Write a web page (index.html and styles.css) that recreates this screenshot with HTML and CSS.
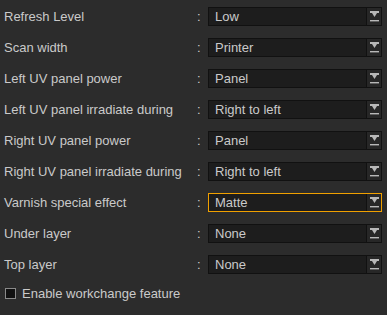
FILE: index.html
```html
<!DOCTYPE html>
<html lang="en">
  <head>
    <meta charset="UTF-8" />
    <title>Print settings</title>
    <link rel="stylesheet" href="styles.css">
  </head>
  <body>
    <div class="panel">
      <div class="row">
        <span class="label">Refresh Level</span>
        <span class="colon">:</span>
        <div class="select"><span class="value">Low</span><span class="btn"><svg width="9" height="12" viewBox="0 0 9 12"><path d="M0 0H9V2H7L4.5 6L2 2H0Z" fill="#b8b8b8"/><rect x="0" y="9" width="9" height="1.4" fill="#b8b8b8"/></svg></span></div>
      </div>
      <div class="row">
        <span class="label">Scan width</span>
        <span class="colon">:</span>
        <div class="select"><span class="value">Printer</span><span class="btn"><svg width="9" height="12" viewBox="0 0 9 12"><path d="M0 0H9V2H7L4.5 6L2 2H0Z" fill="#b8b8b8"/><rect x="0" y="9" width="9" height="1.4" fill="#b8b8b8"/></svg></span></div>
      </div>
      <div class="row">
        <span class="label">Left UV panel power</span>
        <span class="colon">:</span>
        <div class="select"><span class="value">Panel</span><span class="btn"><svg width="9" height="12" viewBox="0 0 9 12"><path d="M0 0H9V2H7L4.5 6L2 2H0Z" fill="#b8b8b8"/><rect x="0" y="9" width="9" height="1.4" fill="#b8b8b8"/></svg></span></div>
      </div>
      <div class="row">
        <span class="label">Left UV panel irradiate during</span>
        <span class="colon">:</span>
        <div class="select"><span class="value">Right to left</span><span class="btn"><svg width="9" height="12" viewBox="0 0 9 12"><path d="M0 0H9V2H7L4.5 6L2 2H0Z" fill="#b8b8b8"/><rect x="0" y="9" width="9" height="1.4" fill="#b8b8b8"/></svg></span></div>
      </div>
      <div class="row">
        <span class="label">Right UV panel power</span>
        <span class="colon">:</span>
        <div class="select"><span class="value">Panel</span><span class="btn"><svg width="9" height="12" viewBox="0 0 9 12"><path d="M0 0H9V2H7L4.5 6L2 2H0Z" fill="#b8b8b8"/><rect x="0" y="9" width="9" height="1.4" fill="#b8b8b8"/></svg></span></div>
      </div>
      <div class="row">
        <span class="label">Right UV panel irradiate during</span>
        <span class="colon">:</span>
        <div class="select"><span class="value">Right to left</span><span class="btn"><svg width="9" height="12" viewBox="0 0 9 12"><path d="M0 0H9V2H7L4.5 6L2 2H0Z" fill="#b8b8b8"/><rect x="0" y="9" width="9" height="1.4" fill="#b8b8b8"/></svg></span></div>
      </div>
      <div class="row">
        <span class="label">Varnish special effect</span>
        <span class="colon">:</span>
        <div class="select focused"><span class="value">Matte</span><span class="btn"><svg width="9" height="12" viewBox="0 0 9 12"><path d="M0 0H9V2H7L4.5 6L2 2H0Z" fill="#b8b8b8"/><rect x="0" y="9" width="9" height="1.4" fill="#b8b8b8"/></svg></span></div>
      </div>
      <div class="row">
        <span class="label">Under layer</span>
        <span class="colon">:</span>
        <div class="select"><span class="value">None</span><span class="btn"><svg width="9" height="12" viewBox="0 0 9 12"><path d="M0 0H9V2H7L4.5 6L2 2H0Z" fill="#b8b8b8"/><rect x="0" y="9" width="9" height="1.4" fill="#b8b8b8"/></svg></span></div>
      </div>
      <div class="row">
        <span class="label">Top layer</span>
        <span class="colon">:</span>
        <div class="select"><span class="value">None</span><span class="btn"><svg width="9" height="12" viewBox="0 0 9 12"><path d="M0 0H9V2H7L4.5 6L2 2H0Z" fill="#b8b8b8"/><rect x="0" y="9" width="9" height="1.4" fill="#b8b8b8"/></svg></span></div>
      </div>
      <div class="check-row">
        <span class="checkbox"></span>
        <span class="check-label">Enable workchange feature</span>
      </div>
    </div>
  </body>
</html>
```

FILE: styles.css
```css
html,
body {
  margin: 0;
  padding: 0;
  height: 100%;
}

body {
  background-color: #2c2c2c;
  color: #cacaca;
  font-family: "Liberation Sans", Arial, sans-serif;
  font-size: 13px;
}

.panel {
  display: flex;
  flex-direction: column;
  gap: 12px;
  padding: 7px 5px 0 4px;
}

.row {
  display: flex;
  align-items: center;
  height: 19px;
}

.label {
  width: 193px;
}

.colon {
  width: 11px;
}

.select {
  display: flex;
  width: 174px;
  height: 19px;
  box-sizing: border-box;
  border: 1px solid #111;
  background-color: #1d1d1d;
}

.select.focused {
  border-color: #f0a000;
}

.value {
  flex: 1;
  padding-left: 6px;
  line-height: 17px;
}

.btn {
  width: 14px;
  border-left: 1px solid #111;
  background-color: #272727;
  display: flex;
  justify-content: center;
  align-items: center;
}

.btn svg {
  display: block;
  margin-top: 1px;
}

.check-row {
  display: flex;
  align-items: center;
  gap: 6px;
  padding-left: 1px;
}

.checkbox {
  width: 11px;
  height: 11px;
  box-sizing: border-box;
  border: 1px solid #8a8a8a;
  background-color: #111;
}
```
